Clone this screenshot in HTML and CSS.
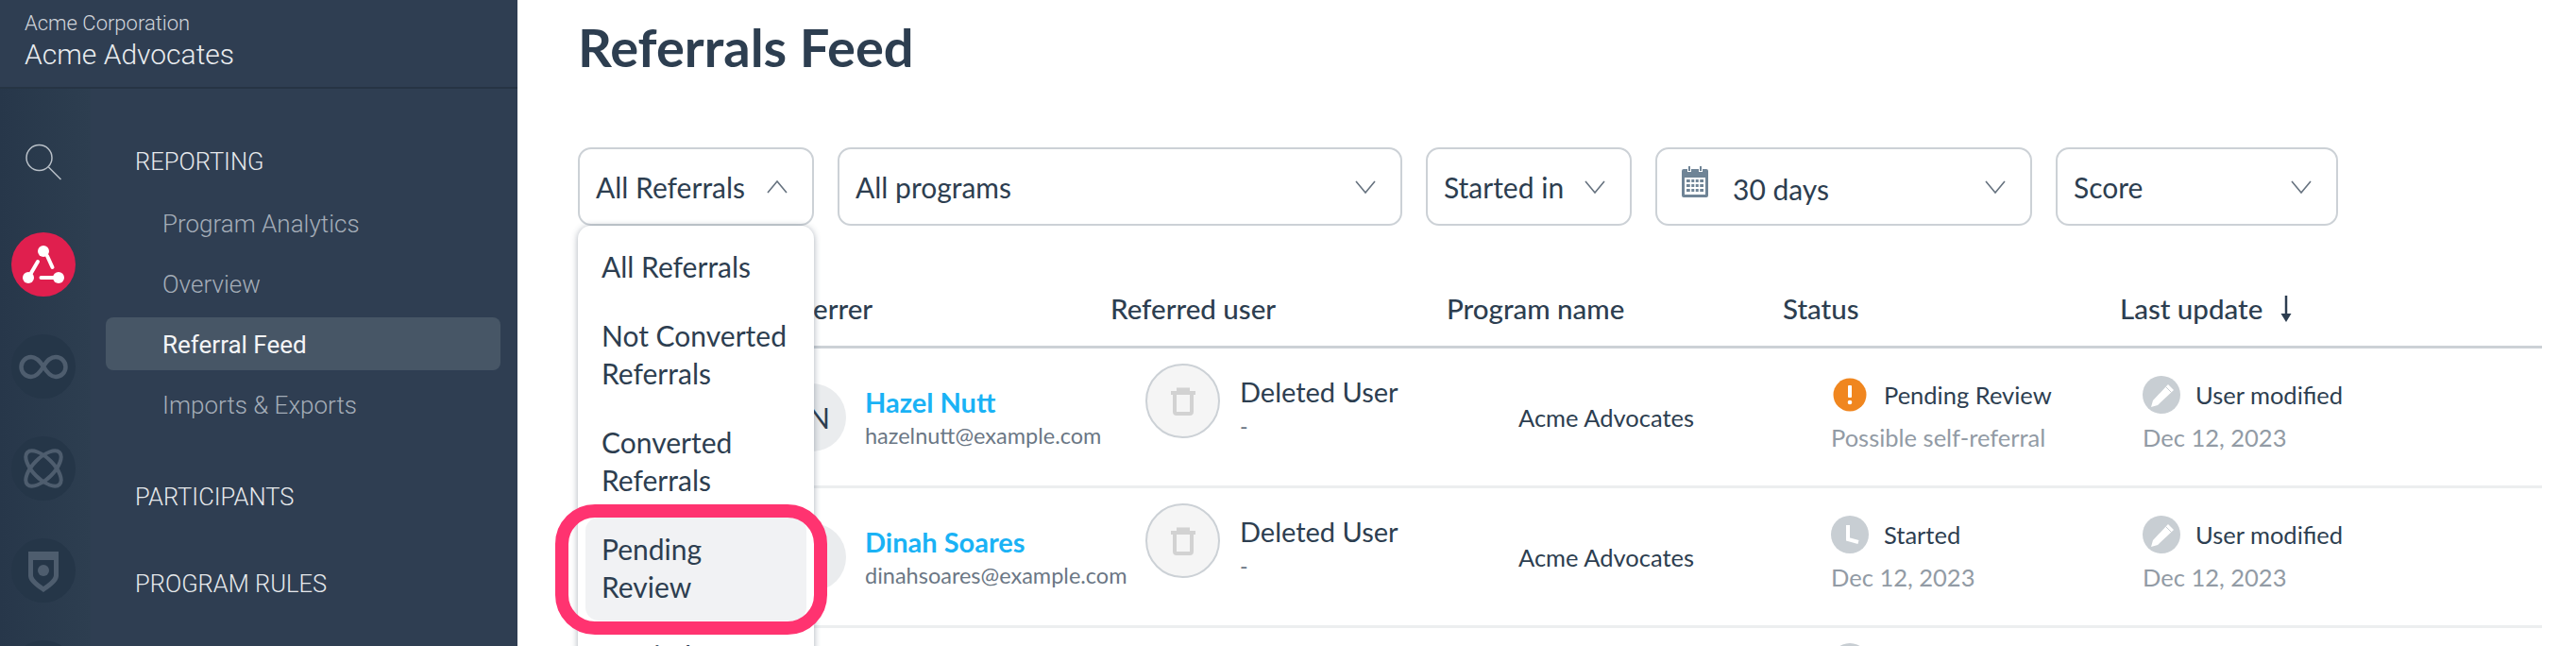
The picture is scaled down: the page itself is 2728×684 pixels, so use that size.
FILE: index.html
```html
<!DOCTYPE html>
<html lang="en">
  <head>
    <meta charset="utf-8">
    <title>Referrals Feed</title>
    <link rel="stylesheet" href="styles.css">
  </head>
  <body>
    <svg class="defs">
      <symbol id="chevron-down" viewBox="0 0 22 14"><path d="M1 1l10 12L21 1" fill="none" stroke="#66727f" stroke-width="1.6"/></symbol>
      <symbol id="chevron-up" viewBox="0 0 22 14"><path d="M1 13L11 1l10 12" fill="none" stroke="#66727f" stroke-width="1.6"/></symbol>
      <symbol id="trash" viewBox="0 0 28 30"><path d="M1 6h26M9 5V2.500h10V5M5 6v20a2 2 0 0 0 2 2h14a2 2 0 0 0 2-2V6" fill="none" stroke="#d2d2d2" stroke-width="4"/></symbol>
      <symbol id="pencil" viewBox="0 0 40 40"><circle cx="20" cy="20" r="20" fill="#c8ced3"/><path d="M27 9l6 6-17 16-7 2 2-7z" fill="#fff"/><path d="M24.500 11.500l6 6" stroke="#c8ced3" stroke-width="1"/></symbol>
      <symbol id="clock" viewBox="0 0 40 40"><circle cx="20" cy="20" r="20" fill="#c8ced3"/><path d="M18 10v15l11 3" fill="none" stroke="#fff" stroke-width="4"/></symbol>
    </svg>

    <aside class="sidebar">
      <div class="brand">
        <div class="brand-org">Acme Corporation</div>
        <div class="brand-name">Acme Advocates</div>
      </div>
      <div class="sidebar-body">
        <div class="rail">
          <div class="rail-item">
            <svg width="68" height="68"><circle cx="29.500" cy="29" r="13.500" fill="none" stroke="#b9c0c8" stroke-width="1.500"/><path d="M39.500 39l13 13" stroke="#b9c0c8" stroke-width="1.500"/></svg>
          </div>
          <div class="rail-item rail-active">
            <svg width="68" height="68">
              <circle cx="34" cy="20" r="6" fill="#fff"/><circle cx="18" cy="48" r="6" fill="#fff"/><circle cx="50" cy="48" r="6" fill="#fff"/>
              <path d="M38 25l5.500 12M21 43l7-12M31.500 48H45" stroke="#fff" stroke-width="4" stroke-linecap="round"/>
            </svg>
          </div>
          <div class="rail-item">
            <svg width="68" height="68"><path d="M34 34c-4-6-8-10-13-10a10.500 10.500 0 0 0 0 21c5 0 9-4 13-11s8-10 13-10a10.500 10.500 0 0 1 0 21c-5 0-9-4-13-11" fill="none" stroke="#4e5d6e" stroke-width="4.500"/></svg>
          </div>
          <div class="rail-item">
            <svg width="68" height="68"><g fill="none" stroke="#4e5d6e" stroke-width="4"><ellipse cx="34" cy="34" rx="24" ry="11" transform="rotate(45 34 34)"/><ellipse cx="34" cy="34" rx="24" ry="11" transform="rotate(-45 34 34)"/></g></svg>
          </div>
          <div class="rail-item">
            <svg width="68" height="68"><path fill-rule="evenodd" d="M18 14h32v26c0 6-10 13-16 17-6-4-16-11-16-17zM23 23v16c0 4 7 9 11 12 4-3 11-8 11-12V23z" fill="#4e5d6e"/><circle cx="34" cy="34" r="6" fill="#4e5d6e"/></svg>
          </div>
          <div class="rail-item"></div>
        </div>
        <nav class="nav">
          <div class="nav-group">
            <div class="nav-head">REPORTING</div>
            <div class="nav-list">
              <a class="nav-item">Program Analytics</a>
              <a class="nav-item">Overview</a>
              <a class="nav-item nav-current">Referral Feed</a>
              <a class="nav-item">Imports &amp; Exports</a>
            </div>
          </div>
          <div class="nav-group"><div class="nav-head">PARTICIPANTS</div></div>
          <div class="nav-group"><div class="nav-head">PROGRAM RULES</div></div>
        </nav>
      </div>
    </aside>

    <main class="main">
      <h1>Referrals Feed</h1>

      <div class="filters">
        <div class="filter filter-type">
          <span>All Referrals</span>
          <svg class="chevron"><use href="#chevron-up"/></svg>
          <div class="menu">
            <div class="menu-item">All Referrals</div>
            <div class="menu-item">Not Converted<br>Referrals</div>
            <div class="menu-item">Converted<br>Referrals</div>
            <div class="menu-item menu-marked">Pending<br>Review</div>
            <div class="menu-item">Denied</div>
          </div>
        </div>
        <div class="filter filter-program">
          <span>All programs</span>
          <svg class="chevron"><use href="#chevron-down"/></svg>
        </div>
        <div class="filter filter-started">
          <span>Started in</span>
          <svg class="chevron"><use href="#chevron-down"/></svg>
        </div>
        <div class="filter filter-days">
          <svg class="calendar" viewBox="0 0 28 33" width="28" height="33">
            <path fill-rule="evenodd" d="M2 3h4v3h4V3h8v3h4V3h4a2 2 0 0 1 2 2v26a2 2 0 0 1-2 2H2a2 2 0 0 1-2-2V5a2 2 0 0 1 2-2zM3 12v18h22V12z" fill="#6f8496"/>
            <path d="M8 0v5M20 0v5" stroke="#6f8496" stroke-width="2"/>
            <path d="M5 14h18v3H5zM5 19h18v3H5zM5 24h18v3H5z" fill="#6f8496"/>
            <path d="M9.500 13v15M14 13v15M18.500 13v15" stroke="#fff" stroke-width="1.500"/>
          </svg>
          <span class="days-label">30 days</span>
          <svg class="chevron"><use href="#chevron-down"/></svg>
        </div>
        <div class="filter filter-score">
          <span>Score</span>
          <svg class="chevron"><use href="#chevron-down"/></svg>
        </div>
      </div>

      <div class="table">
        <div class="row head">
          <div></div>
          <div class="head-referrer">Referrer</div>
          <div>Referred user</div>
          <div>Program name</div>
          <div>Status</div>
          <div class="sort">Last update
            <svg width="14" height="28" viewBox="0 0 14 28"><path d="M7 0v24" stroke="#2d3e50" stroke-width="2.500"/><path d="M1.500 19h11L7 28z" fill="#2d3e50"/></svg>
          </div>
        </div>

        <div class="row">
          <div></div>
          <div class="referrer">
            <div class="avatar">HN</div>
            <div>
              <div class="name">Hazel Nutt</div>
              <div class="email">hazelnutt@example.com</div>
            </div>
          </div>
          <div class="referred">
            <div class="deleted"><svg width="28" height="30"><use href="#trash"/></svg></div>
            <div>
              <div class="deleted-name">Deleted User</div>
              <div class="deleted-dash">-</div>
            </div>
          </div>
          <div class="program">Acme Advocates</div>
          <div class="status">
            <div class="state">
              <svg width="40" height="40" viewBox="0 0 40 40"><circle cx="20" cy="20" r="17.500" fill="#f0861f"/><rect x="18" y="10" width="4" height="13" rx="1" fill="#fff"/><circle cx="20" cy="28" r="2.300" fill="#fff"/></svg>
              <span>Pending Review</span>
            </div>
            <div class="note">Possible self-referral</div>
          </div>
          <div class="update">
            <div class="state"><svg width="40" height="40"><use href="#pencil"/></svg><span>User modified</span></div>
            <div class="note">Dec 12, 2023</div>
          </div>
        </div>

        <div class="row">
          <div></div>
          <div class="referrer">
            <div class="avatar">DS</div>
            <div>
              <div class="name">Dinah Soares</div>
              <div class="email">dinahsoares@example.com</div>
            </div>
          </div>
          <div class="referred">
            <div class="deleted"><svg width="28" height="30"><use href="#trash"/></svg></div>
            <div>
              <div class="deleted-name">Deleted User</div>
              <div class="deleted-dash">-</div>
            </div>
          </div>
          <div class="program">Acme Advocates</div>
          <div class="status">
            <div class="state"><svg width="40" height="40"><use href="#clock"/></svg><span>Started</span></div>
            <div class="note">Dec 12, 2023</div>
          </div>
          <div class="update">
            <div class="state"><svg width="40" height="40"><use href="#pencil"/></svg><span>User modified</span></div>
            <div class="note">Dec 12, 2023</div>
          </div>
        </div>

        <div class="row row-cut">
          <div></div><div></div><div></div><div></div>
          <div class="status"><svg width="40" height="40"><use href="#clock"/></svg></div>
          <div></div>
        </div>
      </div>
    </main>
  </body>
</html>
```
FILE: styles.css
```css
html, body {
    margin: 0;
    height: 684px;
    overflow: hidden;
}

body {
    display: flex;
    background: #fff;
    color: #2d3e50;
    font-family: "Lato", "Noto Sans", sans-serif;
}

.defs {
    display: none;
}

/* sidebar */
.sidebar {
    flex: 0 0 548px;
    display: flex;
    flex-direction: column;
    background: #2f3e52;
    font-family: "Roboto", sans-serif;
    font-weight: 300;
}

.brand {
    height: 94px;
    box-sizing: border-box;
    padding: 11px 0 0 26px;
    border-bottom: 2px solid #263444;
    color: #e9ecef;
}

.brand-org {
    font-size: 22px;
    line-height: 27px;
    color: #cfd4da;
}

.brand-name {
    margin-top: 2px;
    font-size: 30px;
    line-height: 36px;
}

.sidebar-body {
    flex: 1;
    display: flex;
    min-height: 0;
}

.rail {
    flex: 0 0 96px;
    box-sizing: border-box;
    padding: 44px 0 0 12px;
    display: flex;
    flex-direction: column;
    gap: 40px;
    background: linear-gradient(to right, #27374a, #2d3e50);
}

.rail-item {
    flex: 0 0 68px;
    width: 68px;
    height: 68px;
    border-radius: 50%;
    background: #253648;
}

.rail-item:first-child {
    background: none;
}

.rail-active {
    background: #e01f4e;
}

.nav {
    flex: 1;
    padding: 48px 18px 0 16px;
}

.nav-group {
    margin-bottom: 36px;
}

.nav-group:first-child {
    margin-bottom: 41px;
}

.nav-head {
    height: 56px;
    line-height: 59px;
    padding-left: 31px;
    font-size: 25.500px;
    color: #e6e9ec;
}

.nav-list {
    margin-top: 10px;
    display: flex;
    flex-direction: column;
    gap: 8px;
}

.nav-item {
    height: 56px;
    line-height: 59px;
    padding-left: 60px;
    border-radius: 8px;
    font-size: 26px;
    color: #a4adb8;
}

.nav-current {
    background: #475666;
    color: #f4f5f7;
    font-weight: 400;
}

/* main column */
.main {
    flex: 1;
    min-width: 0;
    padding: 20px 36px 0 64px;
}

h1 {
    margin: 0 0 76px;
    font-size: 56px;
    line-height: 60px;
    font-weight: 700;
}

.filters {
    display: flex;
    gap: 25px;
}

.filter {
    position: relative;
    height: 83px;
    box-sizing: border-box;
    display: flex;
    align-items: center;
    padding: 0 26px 0 17px;
    border: 2px solid #ccd1d6;
    border-radius: 14px;
    font-size: 30px;
}

.filter > span {
    flex: 1;
}

.filter-type { width: 250px; }
.filter-program { width: 598px; }
.filter-started { width: 218px; }
.filter-days { width: 399px; }
.filter-score { width: 299px; }

.chevron {
    flex: none;
    width: 22px;
    height: 14px;
}

.calendar {
    flex: none;
    align-self: flex-start;
    margin: 18px 26px 0 9px;
}

.days-label {
    padding-top: 4px;
}

/* open dropdown */
.menu {
    position: absolute;
    z-index: 2;
    top: 81px;
    left: -2px;
    width: 250px;
    box-sizing: border-box;
    padding: 10px 8px;
    display: flex;
    flex-direction: column;
    gap: 4px;
    background: #fff;
    border-radius: 14px;
    box-shadow: 0 1px 7px rgba(60, 75, 95, 0.45);
}

.menu-item {
    position: relative;
    padding: 13px 17px 16px;
    line-height: 40px;
    border-radius: 14px;
}

.menu-marked {
    background: #f1f2f4;
}

.menu-marked::after {
    content: "";
    position: absolute;
    top: -14px;
    right: -22px;
    bottom: -15px;
    left: -32px;
    border: 14px solid #ff3370;
    border-radius: 42px;
}

/* table */
.table {
    margin-top: 60px;
}

.row {
    display: grid;
    grid-template-columns: 212px 352px 356px 356px 357px 1fr;
    height: 148px;
    box-sizing: border-box;
    border-bottom: 3px solid #eceeef;
}

.head {
    height: 70px;
    padding-bottom: 12px;
    align-items: center;
    border-bottom-color: #ccd1d6;
    font-size: 29.500px;
    font-weight: 500;
}

.head-referrer {
    margin-left: -6px;
}

.sort {
    display: flex;
    align-items: center;
    gap: 18px;
}

.referrer {
    display: flex;
    align-items: center;
    gap: 20px;
}

.avatar {
    flex: none;
    width: 72px;
    height: 72px;
    box-sizing: border-box;
    padding-right: 8px;
    line-height: 72px;
    border-radius: 50%;
    background: #eaecee;
    text-align: center;
    font-size: 30px;
}

.name {
    font-size: 29px;
    line-height: 38px;
    font-weight: 700;
    color: #1ab2f5;
}

.email {
    font-size: 23.500px;
    line-height: 32px;
    color: #6b7785;
}

.referred {
    display: flex;
    gap: 21px;
    padding: 16px 0 0 37px;
}

.deleted {
    flex: none;
    width: 79px;
    height: 79px;
    box-sizing: border-box;
    display: flex;
    align-items: center;
    justify-content: center;
    border: 2px solid #ccd1d6;
    border-radius: 50%;
    background: #f5f5f5;
}

.deleted-name {
    font-size: 29px;
    line-height: 40px;
    margin-top: 10px;
}

.deleted-dash {
    font-size: 23px;
    line-height: 32px;
    color: #6b7785;
}

.program {
    align-self: center;
    padding-left: 76px;
    font-size: 25.500px;
}

.status {
    padding: 29px 0 0 51px;
    font-size: 25.500px;
}

.update {
    padding: 29px 0 0 24px;
    font-size: 25.500px;
}

.state {
    display: flex;
    align-items: center;
    gap: 16px;
    height: 40px;
}

.note {
    margin-top: 7px;
    line-height: 36px;
    color: #929ba5;
}

.row-cut {
    border-bottom: 0;
}

.row-cut .status {
    padding-top: 16px;
}
```
